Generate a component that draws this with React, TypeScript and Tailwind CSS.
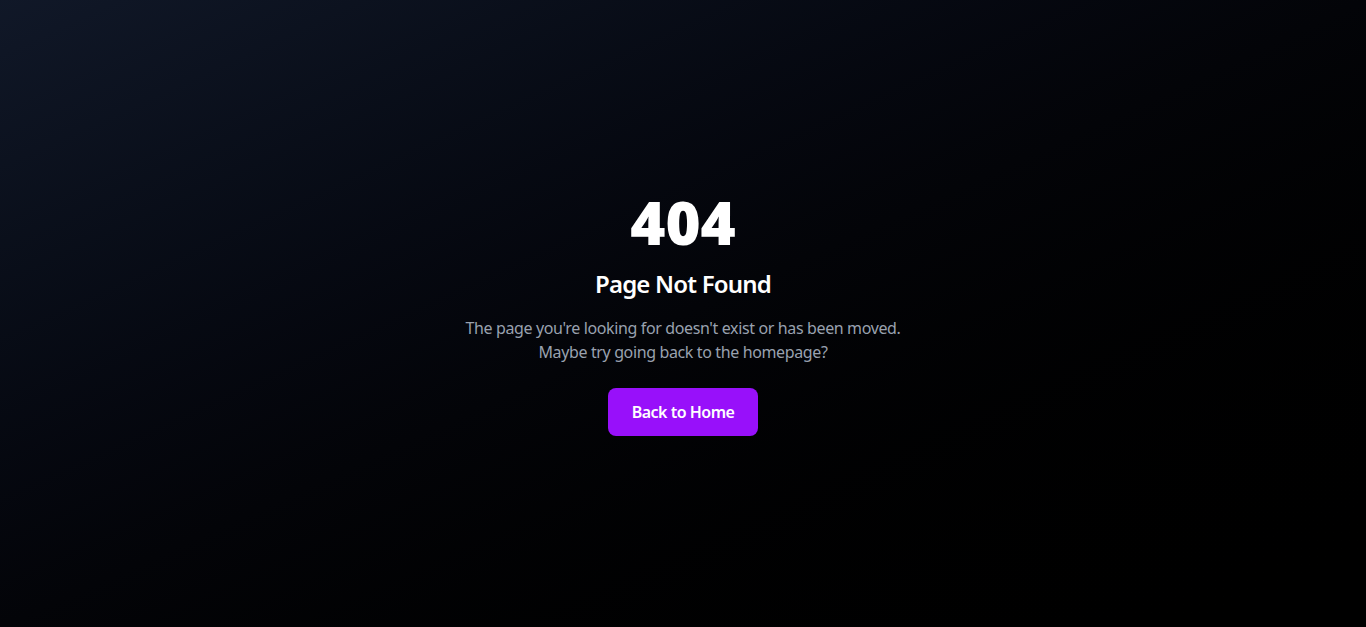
export default function App() {
  return (
    <div className="min-h-screen flex items-center justify-center bg-gradient-to-br from-gray-900 via-[#030408] to-black font-['Noto_Sans',sans-serif]">
      <div className="text-center px-4">
        <h1 className="text-6xl font-black text-white mb-4">404</h1>
        <h2 className="text-2xl font-semibold text-white tracking-[-0.8px] mb-4">Page Not Found</h2>
        <p className="text-gray-400 tracking-[-0.37px] mb-6">
          The page you're looking for doesn't exist or has been moved.
          <br />
          Maybe try going back to the homepage?
        </p>
        <a
          href="#"
          className="inline-block px-6 py-3 bg-purple-600 hover:bg-purple-700 text-white font-semibold tracking-[-0.5px] rounded-lg transition-colors"
        >
          Back to Home
        </a>
      </div>
    </div>
  );
}
